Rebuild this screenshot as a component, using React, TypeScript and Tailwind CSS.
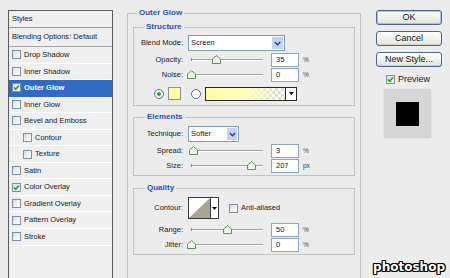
import React from "react";

function Check({ checked }: { checked?: boolean }) {
  return (
    <span className="w-[9px] h-[9px] border border-[#7d8fa8] bg-linear-to-br from-[#deded8] to-white flex items-center justify-center shrink-0">
      {checked && (
        <svg width="7" height="7" viewBox="0 0 7 7">
          <path d="M1 3.4 L2.7 5.2 L6 1.4" stroke="#22a022" strokeWidth="1.6" fill="none" />
        </svg>
      )}
    </span>
  );
}

function Radio({ on }: { on?: boolean }) {
  return (
    <span className="w-[10px] h-[10px] rounded-full border border-[#55709a] bg-white flex items-center justify-center shrink-0">
      {on && <span className="w-[4px] h-[4px] rounded-full bg-[#2aa82a]" />}
    </span>
  );
}

function Chevron() {
  return (
    <svg width="7" height="5" viewBox="0 0 7 5">
      <path d="M0.8 1 L3.5 3.7 L6.2 1" stroke="#26427e" strokeWidth="1.5" fill="none" />
    </svg>
  );
}

function Slider({ value, max }: { value: number; max: number }) {
  const pct = (value / max) * 100;
  return (
    <div className="relative w-[72px] h-[10px] ml-[8px] flex items-center shrink-0">
      <div className="w-full h-[2px] border-t border-[#a3a3a3] border-b border-b-white" />
      <span className="absolute left-0 top-[3px] w-px h-[3px] bg-[#8a8a8a]" />
      <svg
        className="absolute top-[0px]"
        style={{ left: `calc(${pct}% - 4px)` }}
        width="9"
        height="9"
        viewBox="0 0 9 9"
      >
        <path d="M0.5 4 L4.5 0.6 L8.5 4 V8.5 H0.5 Z" fill="#f3f9f0" stroke="#5f8f5a" />
      </svg>
    </div>
  );
}

function Num({ v }: { v: string }) {
  return (
    <div className="ml-[8px] w-[28px] h-[14px] border border-[#8fa6c2] bg-white pl-[4px] flex items-center shrink-0">
      {v}
    </div>
  );
}

function SliderRow({
  label,
  value,
  max,
  unit,
  cls,
}: {
  label: string;
  value: number;
  max: number;
  unit: string;
  cls: string;
}) {
  return (
    <div className={`flex items-center h-[14px] ${cls}`}>
      <span className="w-[49px] text-right shrink-0">{label}</span>
      <Slider value={value} max={max} />
      <Num v={String(value)} />
      <span className="ml-[4px] text-[6.5px] text-[#444]">{unit}</span>
    </div>
  );
}

const items: { l: string; c?: boolean; s?: boolean; i?: boolean }[] = [
  { l: "Drop Shadow" },
  { l: "Inner Shadow" },
  { l: "Outer Glow", c: true, s: true },
  { l: "Inner Glow" },
  { l: "Bevel and Emboss" },
  { l: "Contour", i: true },
  { l: "Texture", i: true },
  { l: "Satin" },
  { l: "Color Overlay", c: true },
  { l: "Gradient Overlay" },
  { l: "Pattern Overlay" },
  { l: "Stroke" },
];

function Button({ children, primary }: { children: React.ReactNode; primary?: boolean }) {
  return (
    <div
      className={`h-[15px] w-[66px] rounded-[3px] border border-[#4f6489] bg-linear-to-b from-white to-[#e4e4de] flex items-center justify-center text-[9px] text-[#111] ${
        primary ? "shadow-[inset_0_0_0_1px_#a8c2ee]" : "shadow-[inset_0_-1px_0_#d6d0c4]"
      }`}
    >
      {children}
    </div>
  );
}

export default function App() {
  return (
    <div className="relative w-[450px] h-[278px] overflow-hidden bg-[#ececec] flex items-start font-['Liberation_Sans',Arial,sans-serif] text-[7.5px] leading-none text-[#1a1a1a]">
      {/* Left styles list */}
      <div className="ml-[8px] mt-[10px] w-[105px] h-[290px] shrink-0 border border-[#5c5c5c] bg-[#efefef] flex flex-col">
        <div className="h-[17px] border-b border-[#9b9b9b] pl-[3px] flex items-center shrink-0">Styles</div>
        <div className="h-[19px] border-b border-[#a9a9a9] pl-[3px] flex items-center shrink-0">
          Blending Options: Default
        </div>
        {items.map((it) => (
          <div
            key={it.l}
            className={`h-[16.55px] shrink-0 border-b flex items-center ${
              it.s ? "bg-[#316ac5] text-white font-bold border-[#316ac5]" : "border-white"
            } ${it.i ? "pl-[14px]" : "pl-[3px]"}`}
          >
            <Check checked={it.c} />
            <span className="ml-[3px]">{it.l}</span>
          </div>
        ))}
      </div>

      {/* Main panel */}
      <fieldset className="ml-[14px] mt-[8px] w-[234px] h-[300px] shrink-0 border border-[#c4c4c4] px-[5px] pt-[4px]">
        <legend className="ml-[4px] px-[2px] text-[8px] leading-[10px] font-bold text-[#2b4fbd]">Outer Glow</legend>

        {/* Structure */}
        <fieldset className="w-[222px] border border-[#c4c4c4] pb-[4px]">
          <legend className="ml-[10px] px-[2px] text-[8px] leading-[10px] font-bold text-[#2b4fbd]">Structure</legend>
          <div className="flex items-center h-[16px] mt-[3px]">
            <span className="w-[49px] text-right shrink-0">Blend Mode:</span>
            <div className="ml-[5px] w-[97px] h-[16px] border border-[#7f9db9] bg-white flex items-center">
              <span className="flex-1 pl-[2px]">Screen</span>
              <span className="w-[13px] h-[14px] bg-[#c2d3f5] border border-white flex items-center justify-center">
                <Chevron />
              </span>
            </div>
          </div>
          <SliderRow label="Opacity:" value={35} max={100} unit="%" cls="mt-[2px]" />
          <SliderRow label="Noise:" value={0} max={100} unit="%" cls="mt-[1px]" />
          <div className="flex items-center h-[15px] mt-[4px] pl-[20px]">
            <Radio on />
            <span className="ml-[4px] w-[13px] h-[13px] border border-[#8d8d8d] bg-[#ffffa6]" />
            <span className="ml-[10px]">
              <Radio />
            </span>
            <div className="ml-[4px] w-[92px] h-[14px] border border-[#2a2a2a] flex">
              <div className="flex-1 [background-image:repeating-conic-gradient(#d8d8d8_0%_25%,#ffffff_0%_50%)] [background-size:6px_6px]">
                <div className="w-full h-full bg-linear-to-r from-[#ffffa6] via-[#ffffc0] to-transparent" />
              </div>
              <span className="w-[11px] h-full border-l border-[#2a2a2a] bg-white flex items-center justify-center">
                <svg width="5" height="3" viewBox="0 0 5 3">
                  <path d="M0 0 H5 L2.5 3 Z" fill="#000" />
                </svg>
              </span>
            </div>
          </div>
        </fieldset>

        {/* Elements */}
        <fieldset className="mt-[6px] w-[222px] border border-[#c4c4c4] pb-[2px]">
          <legend className="ml-[11px] px-[2px] text-[8px] leading-[10px] font-bold text-[#2b4fbd]">Elements</legend>
          <div className="flex items-center h-[16px] mt-[4px]">
            <span className="w-[49px] text-right shrink-0">Technique:</span>
            <div className="ml-[5px] w-[51px] h-[16px] border border-[#7f9db9] bg-white flex items-center">
              <span className="flex-1 pl-[2px]">Softer</span>
              <span className="w-[12px] h-[14px] bg-[#c2d3f5] border border-white flex items-center justify-center">
                <Chevron />
              </span>
            </div>
          </div>
          <SliderRow label="Spread:" value={3} max={100} unit="%" cls="mt-[2px]" />
          <SliderRow label="Size:" value={207} max={250} unit="px" cls="mt-[1px]" />
        </fieldset>

        {/* Quality */}
        <fieldset className="mt-[7px] w-[222px] border border-[#c4c4c4] pb-[2px]">
          <legend className="ml-[11px] px-[2px] text-[8px] leading-[10px] font-bold text-[#2b4fbd]">Quality</legend>
          <div className="flex items-center h-[22px] mt-[4px]">
            <span className="w-[49px] text-right shrink-0">Contour:</span>
            <div className="ml-[5px] w-[31px] h-[22px] border border-[#3a3a3a] bg-white flex">
              <svg width="21" height="20" viewBox="0 0 21 20" className="shrink-0">
                <path d="M0 20 L21 0 V20 Z" fill="#aaa496" />
              </svg>
              <span className="flex-1 border-l border-[#3a3a3a] flex items-center justify-center">
                <svg width="5" height="3" viewBox="0 0 5 3">
                  <path d="M0 0 H5 L2.5 3 Z" fill="#000" />
                </svg>
              </span>
            </div>
            <span className="ml-[10px]">
              <Check />
            </span>
            <span className="ml-[3px]">Anti-aliased</span>
          </div>
          <SliderRow label="Range:" value={50} max={100} unit="%" cls="mt-[4px]" />
          <SliderRow label="Jitter:" value={0} max={100} unit="%" cls="mt-[1px]" />
        </fieldset>
      </fieldset>

      {/* Right column */}
      <div className="ml-[15px] w-[66px] shrink-0 flex flex-col">
        <div className="mt-[10px]">
          <Button primary>OK</Button>
        </div>
        <div className="mt-[6px]">
          <Button>Cancel</Button>
        </div>
        <div className="mt-[6px]">
          <Button>New Style...</Button>
        </div>
        <div className="mt-[7px] h-[10px] flex items-center pl-[10px] text-[9px]">
          <Check checked />
          <span className="ml-[3px]">Preview</span>
        </div>
        <div className="mt-[4px] ml-[7px] w-[49px] h-[51px] bg-[#d6d6d6] border border-[#e6e6e6] flex items-center justify-center">
          <div className="w-[23px] h-[24px] bg-black" />
        </div>
      </div>

      {/* Watermark */}
      <div className="absolute right-[5px] top-[259px] leading-[16px] text-[12px] font-bold text-white font-['DejaVu_Sans',sans-serif] [text-shadow:1px_0_#000,-1px_0_#000,0_1px_#000,0_-1px_#000,1px_1px_#000,-1px_-1px_#000,1px_-1px_#000,-1px_1px_#000]">
        photoshop
      </div>
    </div>
  );
}
